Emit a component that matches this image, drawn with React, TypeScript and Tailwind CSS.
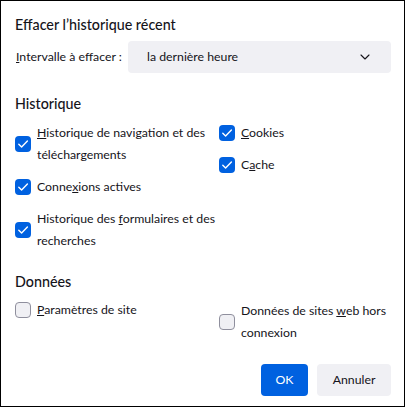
import React from "react";

function Check({ checked }: { checked: boolean }) {
  return checked ? (
    <div className="w-4 h-4 shrink-0 rounded-[4px] bg-[#0061e0] flex items-center justify-center">
      <svg width="12" height="12" viewBox="0 0 12 12" fill="none">
        <path d="M1.8 6.2 L4.6 9 L10.4 3" stroke="white" strokeWidth="1.4" strokeLinecap="round" strokeLinejoin="round" />
      </svg>
    </div>
  ) : (
    <div className="w-4 h-4 shrink-0 rounded-[4px] bg-[#f0f0f4] border border-[#8f8f9d]" />
  );
}

function Item({ checked, children }: { checked: boolean; children: React.ReactNode }) {
  return (
    <div className="flex items-center gap-[6px]">
      <Check checked={checked} />
      <span className="leading-[22px] whitespace-nowrap">{children}</span>
    </div>
  );
}

export default function App() {
  return (
    <div
      className="w-[405px] h-[407px] border border-black bg-white text-[#15141a] text-[12.3px] flex flex-col pl-[14px] pr-[13px]"
      style={{ fontFamily: 'Lato, "Noto Sans", sans-serif' }}
    >
      <div className="pt-[13px] text-[14.3px] leading-[22px] font-medium">Effacer l’historique récent</div>
      <div className="mt-[5px] flex items-center h-[32px]">
        <span className="pl-[1px] w-[113px] whitespace-nowrap">
          <u>I</u>ntervalle à effacer :
        </span>
        <div className="flex-1 h-[32px] rounded-[4px] bg-[#f0f0f4] flex items-center justify-between pl-[19px] pr-[21px]">
          <span>la dernière heure</span>
          <svg width="10" height="6" viewBox="0 0 10 6" fill="none">
            <path d="M1 1 L5 5 L9 1" stroke="#15141a" strokeWidth="1.1" strokeLinecap="round" strokeLinejoin="round" />
          </svg>
        </div>
      </div>

      <div className="mt-[20px] text-[14.3px] leading-[22px] font-medium">Historique</div>
      <div className="mt-[7px] grid grid-cols-[204px_1fr]">
        <div className="flex flex-col gap-[10px]">
          <Item checked>
            <u>H</u>istorique de navigation et des
            <br />
            téléchargements
          </Item>
          <Item checked>
            Conne<u>x</u>ions actives
          </Item>
          <Item checked>
            Historique des <u>f</u>ormulaires et des
            <br />
            recherches
          </Item>
        </div>
        <div className="flex flex-col gap-[10px] self-start">
          <Item checked>
            <u>C</u>ookies
          </Item>
          <Item checked>
            C<u>a</u>che
          </Item>
        </div>
      </div>

      <div className="mt-[19px] text-[14.3px] leading-[22px] font-medium">Données</div>
      <div className="mt-[6px] grid grid-cols-[204px_1fr] items-start">
        <Item checked={false}>
          <u>P</u>aramètres de site
        </Item>
        <div className="mt-[1px]">
          <Item checked={false}>
            Données de sites <u>w</u>eb hors
            <br />
            connexion
          </Item>
        </div>
      </div>

      <div className="mt-auto mb-[10px] flex justify-end gap-[9px]">
        <button className="h-[32px] w-[47px] rounded-[4px] bg-[#0061e0] text-white">OK</button>
        <button className="h-[32px] w-[74px] rounded-[4px] bg-[#f0f0f4]">Annuler</button>
      </div>
    </div>
  );
}
